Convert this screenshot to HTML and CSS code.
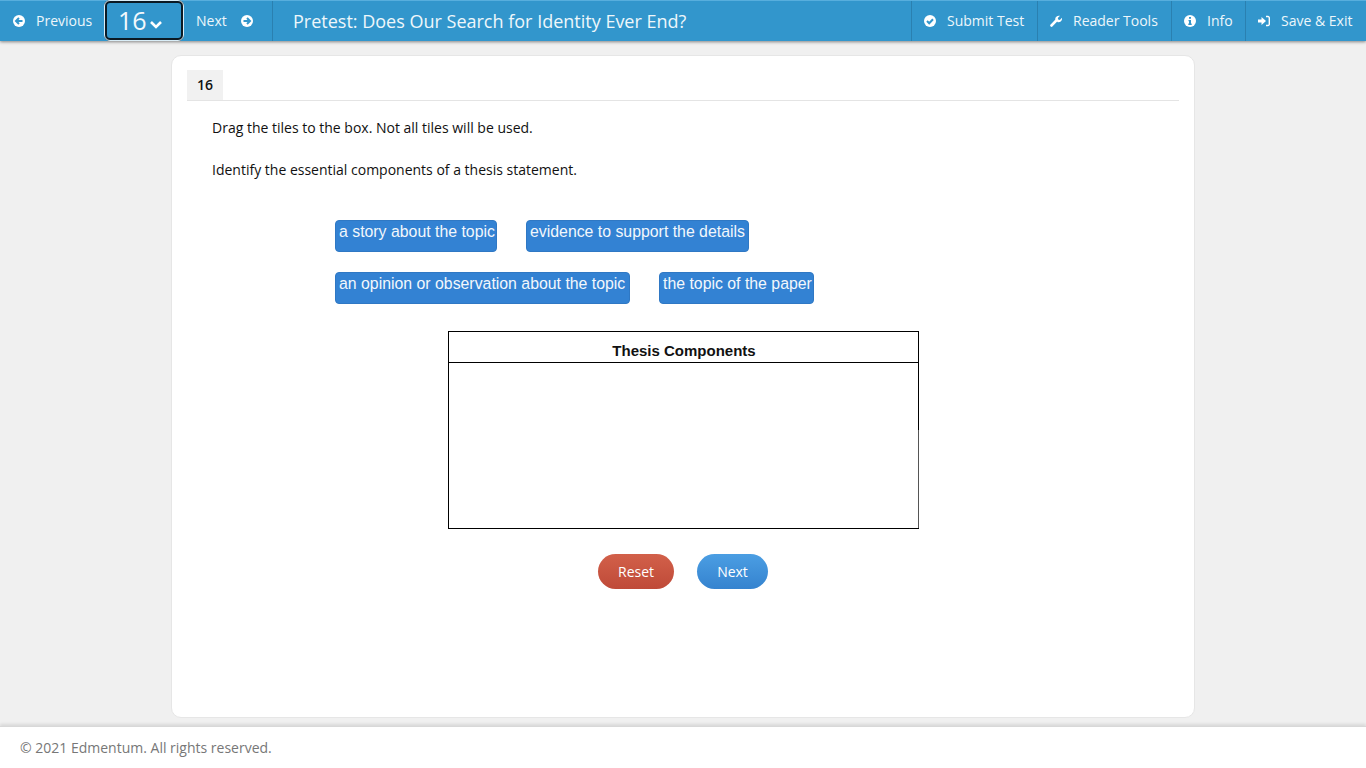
FILE: index.html
```html
<!DOCTYPE html>
<html lang="en">
<head>
<meta charset="utf-8">
<title>Pretest: Does Our Search for Identity Ever End?</title>
<link rel="stylesheet" href="styles.css">
</head>
<body>
<header class="topbar">
  <a class="nav-item prev"><svg class="icon icon-l" viewBox="0 0 12 12"><circle cx="6" cy="6" r="6" fill="#fff"/><path d="M9.5 6H4M6 3 3 6l3 3" fill="none" stroke="#3296cc" stroke-width="2"/></svg>Previous</a>
  <button class="qnum">16<svg class="chev" viewBox="0 0 14 10"><path d="M2 2l5 5 5-5" fill="none" stroke="#fff" stroke-width="2.6"/></svg></button>
  <a class="nav-item next">Next<svg class="icon icon-r" viewBox="0 0 12 12"><circle cx="6" cy="6" r="6" fill="#fff"/><path d="M2.5 6H8M6 3l3 3-3 3" fill="none" stroke="#3296cc" stroke-width="2"/></svg></a>
  <h1 class="title">Pretest: Does Our Search for Identity Ever End?</h1>
  <nav class="right">
    <a class="tool submit"><svg class="icon icon-l" viewBox="0 0 12 12"><circle cx="6" cy="6" r="6" fill="#fff"/><path d="M3 6l2.2 2.2L9 4.2" fill="none" stroke="#3296cc" stroke-width="2"/></svg>Submit Test</a>
    <a class="tool reader"><svg class="icon icon-l" viewBox="0 0 12 12"><path d="M1.6 10.4 6.2 5.6" fill="none" stroke="#fff" stroke-width="2.8" stroke-linecap="round"/><path d="M5.2 4.2C5.2 1.8 7.6.2 10 .8L7.8 3l.4 1.6 1.6.4L12 2.8c.5 2.5-1.6 4.9-4.200 4.500z" fill="#fff"/></svg>Reader Tools</a>
    <a class="tool info"><svg class="icon icon-l" viewBox="0 0 12 12"><circle cx="6" cy="6" r="6" fill="#fff"/><path d="M5 2h2v1.700H5zM4.500 5h2.500v3.500h.7V10H4.300V8.500H5V6.300h-.5z" fill="#3296cc"/></svg>Info</a>
    <a class="tool save"><svg class="icon icon-l" viewBox="0 0 12 12"><path d="M0 4.500h3.500V2L8 6l-4.500 4V7.500H0z" fill="#fff"/><path d="M8 1.500h2a1.300 1.300 0 0 1 1.300 1.300v6.400A1.300 1.300 0 0 1 10 10.500H8" fill="none" stroke="#fff" stroke-width="1.400"/></svg>Save &amp; Exit</a>
  </nav>
</header>

<main class="page">
  <section class="card">
    <div class="tabline"><span class="tab">16</span></div>
    <div class="question">
      <p>Drag the tiles to the box. Not all tiles will be used.</p>
      <p>Identify the essential components of a thesis statement.</p>
    </div>
    <div class="tiles">
      <div class="tile-row">
        <span class="tile tile-story">a story about the topic</span>
        <span class="tile tile-evidence">evidence to support the details</span>
      </div>
      <div class="tile-row">
        <span class="tile tile-opinion">an opinion or observation about the topic</span>
        <span class="tile tile-paper">the topic of the paper</span>
      </div>
    </div>
    <div class="dropbox">
      <div class="dropbox-head">Thesis Components</div>
      <div class="dropbox-body"></div>
    </div>
    <div class="actions">
      <button class="pill reset">Reset</button>
      <button class="pill go">Next</button>
    </div>
  </section>
</main>

<footer class="footer">© 2021 Edmentum. All rights reserved.</footer>
</body>
</html>
```
FILE: styles.css
```css
* { box-sizing: border-box; }
html, body { height: 100%; }
body {
  margin: 0;
  height: 768px;
  overflow: hidden;
  display: flex;
  flex-direction: column;
  background: #f0f0f0;
  font-family: "Open Sans", sans-serif;
  font-size: 14px;
  color: #111;
}
.topbar {
  flex: none;
  height: 41px;
  display: flex;
  align-items: stretch;
  background: #3296cc;
  border-top: 1px solid #57aedd;
  box-shadow: 0 1px 3px rgba(0, 0, 0, .45);
  color: #fff;
  position: relative;
  z-index: 2;
}
.nav-item, .tool {
  display: flex;
  align-items: center;
  color: #edf6fb;
  line-height: 1;
  padding-bottom: 1px;
}
.prev { width: 104px; padding-left: 13px; }
.next { width: 89px; padding-left: 12px; border-right: 1px solid #2a80b0; }
.icon { width: 12px; height: 12px; flex: none; }
.icon-l { margin-right: 11px; }
.icon-r { margin-left: 14px; }
.qnum {
  width: 80px;
  height: 41px;
  margin-top: -1px;
  padding: 0 0 0 11px;
  display: flex;
  align-items: center;
  background: #3296cc;
  border: 3px solid #0b1a24;
  outline: 1px solid #d9edf7;
  outline-offset: -1px;
  border-radius: 6px;
  color: #f3f9fc;
  font: 25px/1 "Open Sans", sans-serif;
}
.chev { width: 14px; height: 10px; margin: 8px 0 0 2px; }
.title {
  margin: 0 0 0 20px;
  align-self: center;
  font-size: 18px;
  font-weight: 400;
  line-height: 1;
  color: #eef7fb;
}
.right { margin-left: auto; display: flex; }
.tool { border-left: 1px solid #2a80b0; padding-left: 12px; }
.submit { width: 126px; }
.reader { width: 134px; }
.info { width: 74px; }
.save { width: 121px; }

.page {
  flex: 1;
  min-height: 0;
  padding: 14px 171px 8px;
}
.card {
  height: 663px;
  background: #fff;
  border: 1px solid #e6e6e6;
  border-radius: 10px;
  padding: 14px 15px 0;
}
.tabline { height: 31px; border-bottom: 1px solid #e4e4e4; }
.tab {
  display: block;
  width: 36px;
  height: 30px;
  background: #f1f1f1;
  font-weight: 600;
  line-height: 29px;
  text-align: center;
  color: #111;
}
.question { padding: 17px 0 0 25px; line-height: 20px; }
.question p { margin: 0 0 22px; }
.tiles {
  margin: 40px 0 0 148px;
  display: flex;
  flex-direction: column;
  gap: 20px;
}
.tile-row { display: flex; gap: 29px; }
.tile {
  height: 32px;
  padding: 0 0 0 3px;
  background: #3382d3;
  border: 1px solid #2f78c4;
  border-radius: 4px;
  font-family: "Liberation Sans", Arial, sans-serif;
  font-size: 15.85px;
  line-height: 21px;
  color: #f2f7fc;
  white-space: nowrap;
}
.tile-story { width: 162px; }
.tile-evidence { width: 223px; }
.tile-opinion { width: 295px; }
.tile-paper { width: 155px; }
.dropbox {
  position: relative;
  width: 471px;
  height: 198px;
  margin: 27px 0 0 261px;
  border: 1px solid #000;
  display: flex;
  flex-direction: column;
}
.dropbox::after {
  content: "";
  position: absolute;
  top: 98px;
  right: -1px;
  bottom: 0;
  width: 1px;
  background: #555;
}
.dropbox-head {
  height: 31px;
  border-bottom: 1px solid #000;
  font-family: "Liberation Sans", Arial, sans-serif;
  font-size: 15px;
  font-weight: 700;
  line-height: 38px;
  text-align: center;
  padding-left: 1px;
  color: #111;
}
.dropbox-body { flex: 1; }
.actions {
  margin: 25px 0 0 411px;
  display: flex;
  gap: 23px;
}
.pill {
  height: 35px;
  border: 0;
  border-radius: 18px;
  color: #fff;
  font: 500 14px/1 "Open Sans", sans-serif;
  padding: 0;
}
.reset { width: 76px; background: linear-gradient(#d2604a, #bf4a38); }
.go { width: 71px; background: linear-gradient(#4b9ee3, #3583cf); }
.footer {
  flex: none;
  height: 42px;
  background: #fff;
  border-top: 1px solid #d8d8d8;
  box-shadow: 0 -2px 3px rgba(0, 0, 0, .1);
  padding: 11px 0 0 20px;
  line-height: 20px;
  color: #777;
}
```
